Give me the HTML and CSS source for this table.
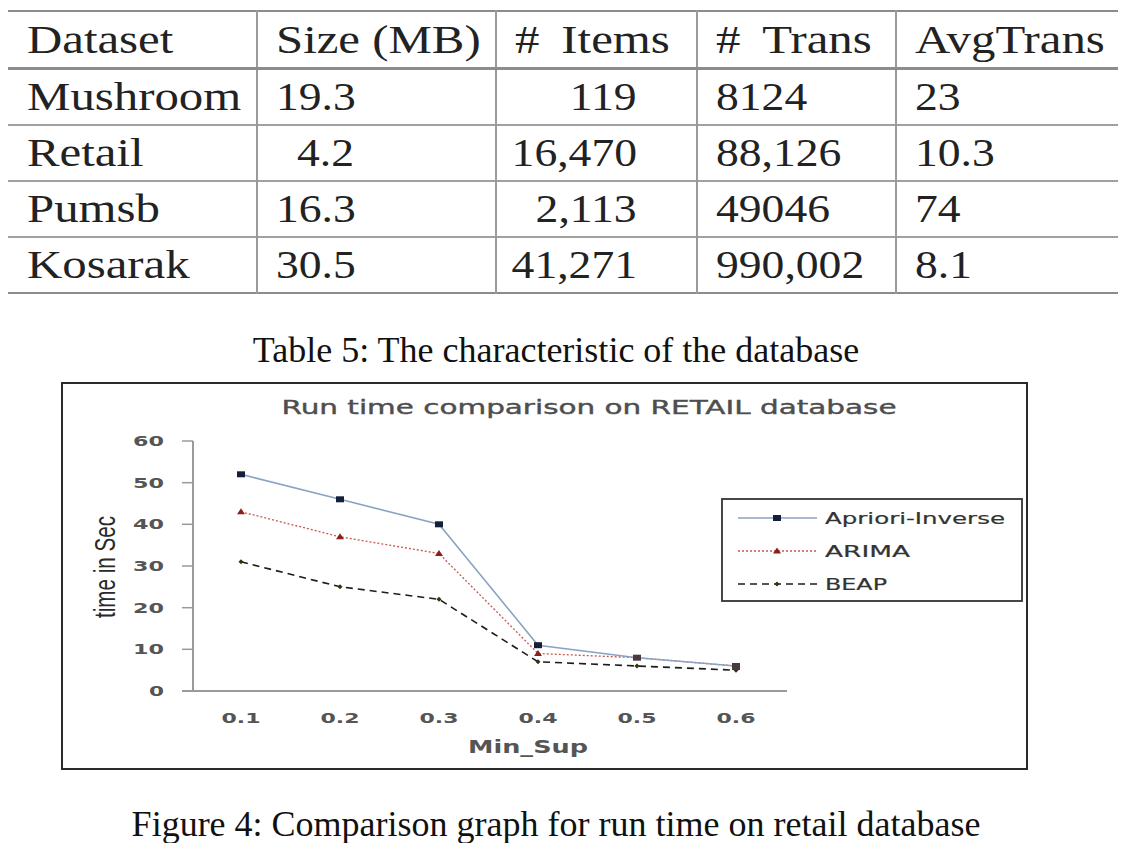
FILE: index.html
```html
<!DOCTYPE html>
<html>
<head>
<meta charset="utf-8">
<link rel="stylesheet" href="styles.css">
</head>
<body>
<table class="data">
  <thead>
    <tr><th class="c1"><span class="t">Dataset</span></th><th class="c2"><span class="t">Size (MB)</span></th><th class="c3 hash"><span class="t">#&nbsp;Items</span></th><th class="c4 hash"><span class="t">#&nbsp;Trans</span></th><th class="c5"><span class="t">AvgTrans</span></th></tr>
  </thead>
  <tbody>
    <tr><td class="c1"><span class="t">Mushroom</span></td><td class="c2"><span class="t n">19.3</span></td><td class="c3 num"><span class="t n">119</span></td><td class="c4"><span class="t n">8124</span></td><td class="c5"><span class="t n">23</span></td></tr>
    <tr><td class="c1"><span class="t">Retail</span></td><td class="c2 indent"><span class="t n">4.2</span></td><td class="c3 num"><span class="t n">16,470</span></td><td class="c4"><span class="t n">88,126</span></td><td class="c5"><span class="t n">10.3</span></td></tr>
    <tr><td class="c1"><span class="t">Pumsb</span></td><td class="c2"><span class="t n">16.3</span></td><td class="c3 num"><span class="t n">2,113</span></td><td class="c4"><span class="t n">49046</span></td><td class="c5"><span class="t n">74</span></td></tr>
    <tr><td class="c1"><span class="t">Kosarak</span></td><td class="c2"><span class="t n">30.5</span></td><td class="c3 num"><span class="t n">41,271</span></td><td class="c4"><span class="t n">990,002</span></td><td class="c5"><span class="t n">8.1</span></td></tr>
  </tbody>
</table>
<p class="caption table-caption">Table 5: The characteristic of the database</p>
<div class="chart-box">
  <svg class="chart" width="963" height="384" viewBox="0 0 963 384" xmlns="http://www.w3.org/2000/svg">
    <text class="title" x="526" y="30" text-anchor="middle" textLength="615" lengthAdjust="spacingAndGlyphs">Run time comparison on RETAIL database</text>
    <!-- axes -->
    <line x1="130" y1="57" x2="130" y2="307" class="axis"/>
    <line x1="119" y1="307" x2="724" y2="307" class="axis"/>
    <g class="ticks">
      <line x1="119" y1="57" x2="130" y2="57"/>
      <line x1="119" y1="98.7" x2="130" y2="98.7"/>
      <line x1="119" y1="140.3" x2="130" y2="140.3"/>
      <line x1="119" y1="182" x2="130" y2="182"/>
      <line x1="119" y1="223.7" x2="130" y2="223.7"/>
      <line x1="119" y1="265.3" x2="130" y2="265.3"/>
    </g>
    <g class="ylab" text-anchor="end">
      <text x="101" y="62" textLength="31" lengthAdjust="spacingAndGlyphs">60</text>
      <text x="101" y="103.7" textLength="31" lengthAdjust="spacingAndGlyphs">50</text>
      <text x="101" y="145.3" textLength="31" lengthAdjust="spacingAndGlyphs">40</text>
      <text x="101" y="187" textLength="31" lengthAdjust="spacingAndGlyphs">30</text>
      <text x="101" y="228.7" textLength="31" lengthAdjust="spacingAndGlyphs">20</text>
      <text x="101" y="270.3" textLength="31" lengthAdjust="spacingAndGlyphs">10</text>
      <text x="101" y="312" textLength="15" lengthAdjust="spacingAndGlyphs">0</text>
    </g>
    <g class="xlab" text-anchor="middle">
      <text x="178" y="339" textLength="39" lengthAdjust="spacingAndGlyphs">0.1</text>
      <text x="277" y="339" textLength="39" lengthAdjust="spacingAndGlyphs">0.2</text>
      <text x="376" y="339" textLength="39" lengthAdjust="spacingAndGlyphs">0.3</text>
      <text x="475" y="339" textLength="39" lengthAdjust="spacingAndGlyphs">0.4</text>
      <text x="574" y="339" textLength="39" lengthAdjust="spacingAndGlyphs">0.5</text>
      <text x="673" y="339" textLength="39" lengthAdjust="spacingAndGlyphs">0.6</text>
    </g>
    <text class="xtitle" x="465" y="369" text-anchor="middle" textLength="120" lengthAdjust="spacingAndGlyphs">Min_Sup</text>
    <text class="ytitle" x="0" y="0" text-anchor="middle" transform="translate(52 183) rotate(-90)" textLength="102" lengthAdjust="spacingAndGlyphs">time in Sec</text>

    <!-- BEAP -->
    <polyline class="s-beap" points="178,177.8 277,202.8 376,215.3 475,277.8 574,282 673,286.2"/>
    <g class="m-beap">
      <path d="M178 175.3 L180.5 177.8 L178 180.3 L175.5 177.8Z"/>
      <path d="M277 200.3 L279.5 202.8 L277 205.3 L274.5 202.8Z"/>
      <path d="M376 212.8 L378.5 215.3 L376 217.8 L373.5 215.3Z"/>
      <path d="M475 275.3 L477.5 277.8 L475 280.3 L472.5 277.8Z"/>
      <path d="M574 279.5 L576.5 282 L574 284.5 L571.5 282Z"/>
      <path d="M673 283.7 L675.5 286.2 L673 288.7 L670.5 286.2Z"/>
    </g>
    <!-- ARIMA -->
    <polyline class="s-arima" points="178,127.8 277,152.8 376,169.5 475,269.5 574,273.7 673,282"/>
    <g class="m-arima">
      <path d="M178 124.3 L182 130.3 L174 130.3Z"/>
      <path d="M277 149.3 L281 155.3 L273 155.3Z"/>
      <path d="M376 166 L380 172 L372 172Z"/>
      <path d="M475 266 L479 272 L471 272Z"/>
    </g>
    <!-- Apriori-Inverse -->
    <polyline class="s-apriori" points="178,90.3 277,115.3 376,140.3 475,261.2 574,273.7 673,282"/>
    <g class="m-apriori">
      <rect x="174" y="87.3" width="8" height="6"/>
      <rect x="273" y="112.3" width="8" height="6"/>
      <rect x="372" y="137.3" width="8" height="6"/>
      <rect x="471" y="258.2" width="8" height="6"/>
      <rect x="570" y="270.7" width="8" height="6" class="mix"/>
      <rect x="669" y="279" width="8" height="7" class="mix"/>
    </g>

    <!-- legend -->
    <rect class="legend" x="659" y="115" width="300" height="102"/>
    <line class="s-apriori" x1="675" y1="134" x2="754" y2="134"/>
    <rect class="m-apriori" x="710" y="131" width="8" height="6"/>
    <text class="legtext" x="762" y="140" textLength="180" lengthAdjust="spacingAndGlyphs">Apriori-Inverse</text>
    <line class="s-arima" x1="675" y1="167" x2="754" y2="167"/>
    <path class="m-arima" d="M714 163.5 L718 169.5 L710 169.5Z"/>
    <text class="legtext" x="762" y="173" textLength="85" lengthAdjust="spacingAndGlyphs">ARIMA</text>
    <line class="s-beap" x1="675" y1="200" x2="754" y2="200"/>
    <path class="m-beap" d="M714 197.5 L716.5 200 L714 202.5 L711.5 200Z"/>
    <text class="legtext" x="762" y="206" textLength="62" lengthAdjust="spacingAndGlyphs">BEAP</text>
  </svg>
</div>
<p class="caption figure-caption">Figure 4: Comparison graph for run time on retail database</p>
</body>
</html>
```

FILE: styles.css
```css
html, body {
  margin: 0;
  padding: 0;
  background: #ffffff;
}

body {
  width: 1127px;
  height: 843px;
  overflow: hidden;
}

.data {
  margin: 10px 0 0 8px;
  width: 1110px;
  border-collapse: collapse;
  table-layout: fixed;
  font-family: "Liberation Serif", "Times New Roman", serif;
  font-size: 40px;
  color: #222;
  border-top: 2px solid #8c8c8c;
  border-bottom: 2px solid #8c8c8c;
}

.data th,
.data td {
  box-sizing: border-box;
  font-weight: normal;
  text-align: left;
  padding: 0 0 0 18px;
  line-height: 54px;
  height: 54px;
  white-space: nowrap;
  overflow: visible;
  border-left: 2px solid #9a9a9a;
  border-top: 2px solid #a0a0a0;
}

.data th {
  line-height: 55px;
  height: 55px;
  border-top: none;
  border-bottom: 3px solid #8c8c8c;
}

.data .t {
  display: inline-block;
  transform: scaleX(1.22);
  transform-origin: left center;
}

.data .t.n {
  transform: scaleX(1.14);
}

.data th.hash {
  word-spacing: 8px;
}

.data .c1 { width: 249px; border-left: none; padding-left: 19px; }
.data .c2 { width: 239px; }
.data .c3 { width: 201px; }
.data .c4 { width: 199px; }
.data .c5 { width: 222px; }

.data td.num {
  text-align: right;
  padding-right: 59px;
  padding-left: 0;
}

.data td.num .t {
  transform-origin: right center;
}

.data td.indent {
  padding-left: 39px;
}

.caption {
  margin: 0;
  width: 1112px;
  text-align: center;
  font-family: "Liberation Serif", "Times New Roman", serif;
  font-size: 36px;
  line-height: 40px;
  color: #111;
}

.table-caption {
  margin-top: 36px;
}

.chart-box {
  margin: 12px 0 0 61px;
  width: 963px;
  height: 384px;
  border: 2px solid #2a2a2a;
}

.chart {
  display: block;
}

.chart .title {
  font-family: "DejaVu Sans", "Liberation Sans", sans-serif;
  font-size: 20px;
  fill: #4e4e4e;
  stroke: #4e4e4e;
  stroke-width: 0.4;
}

.chart .axis {
  stroke: #9a9a9a;
  stroke-width: 2;
}

.chart .ticks line {
  stroke: #9a9a9a;
  stroke-width: 1.5;
}

.chart .ylab text,
.chart .xlab text {
  font-family: "DejaVu Sans", "Liberation Sans", sans-serif;
  font-weight: bold;
  font-size: 14px;
  fill: #555;
}

.chart .xtitle {
  font-family: "DejaVu Sans", "Liberation Sans", sans-serif;
  font-weight: bold;
  font-size: 18px;
  fill: #555;
}

.chart .ytitle {
  font-family: "Liberation Sans", "DejaVu Sans", sans-serif;
  font-size: 29px;
  fill: #2a2a2a;
}

.chart .s-apriori {
  fill: none;
  stroke: #8aa3c2;
  stroke-width: 1.6;
}

.chart .s-arima {
  fill: none;
  stroke: #c9574f;
  stroke-width: 1.3;
  stroke-dasharray: 2 2;
}

.chart .s-beap {
  fill: none;
  stroke: #1c1c1c;
  stroke-width: 1.6;
  stroke-dasharray: 7 5;
}

.chart .m-apriori,
.chart .m-apriori rect {
  fill: #14203a;
}

.chart .m-apriori .mix {
  fill: #4a3a40;
}

.chart .m-arima,
.chart .m-arima path {
  fill: #8a1f1c;
}

.chart .m-beap,
.chart .m-beap path {
  fill: #2e3310;
}

.chart .legend {
  fill: #ffffff;
  stroke: #333333;
  stroke-width: 1.8;
}

.chart .legtext {
  font-family: "DejaVu Sans", "Liberation Sans", sans-serif;
  font-size: 16px;
  fill: #333333;
  stroke: #333333;
  stroke-width: 0.2;
}

.figure-caption {
  margin-top: 34px;
}
```
